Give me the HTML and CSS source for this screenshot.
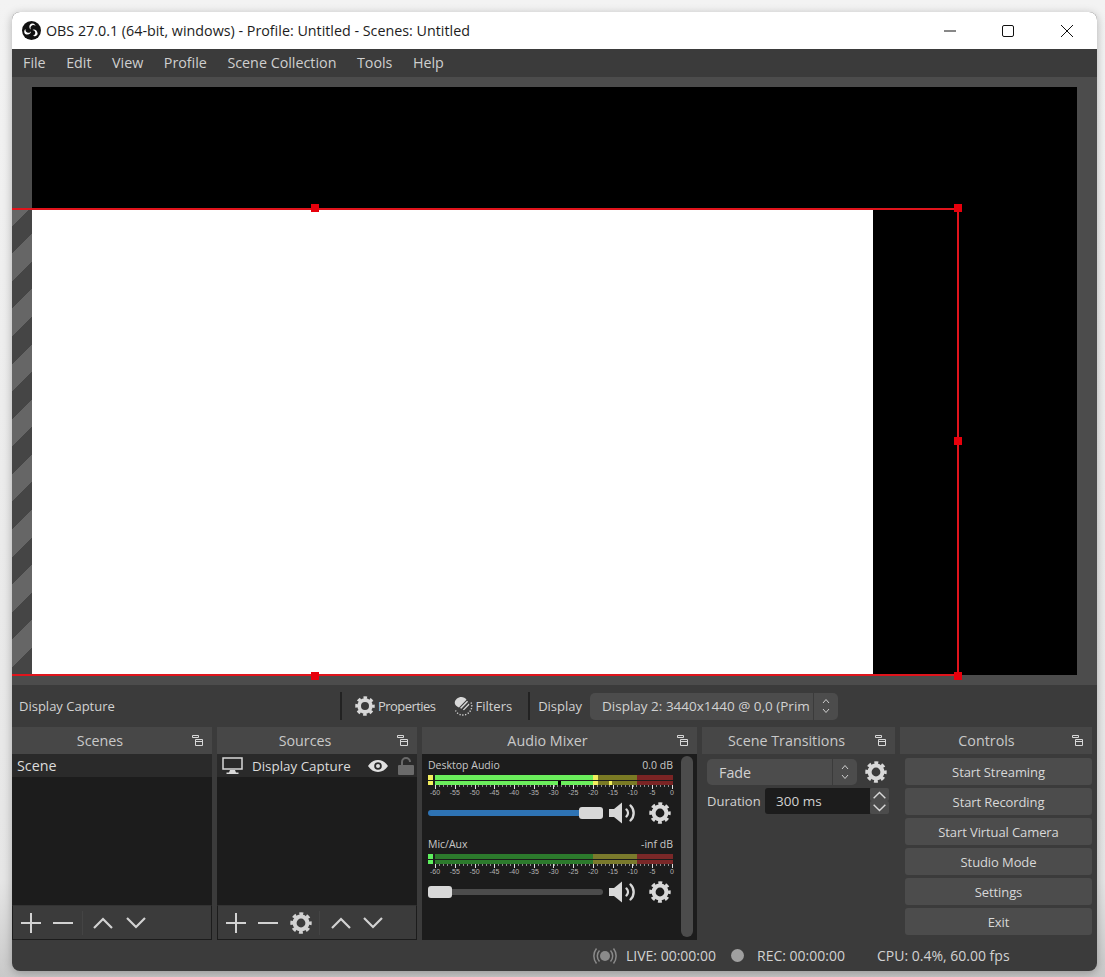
FILE: index.html
```html
<!DOCTYPE html>
<html lang="en">
<head>
<meta charset="utf-8">
<title>OBS 27.0.1</title>
<link rel="stylesheet" href="styles.css">
</head>
<body>
<svg class="defs" width="0" height="0" aria-hidden="true">
  <symbol id="gear" viewBox="0 0 24 24">
    <circle cx="12" cy="12" r="7" fill="none" stroke="currentColor" stroke-width="4.4"/>
    <circle cx="12" cy="12" r="9.9" fill="none" stroke="currentColor" stroke-width="3.6" stroke-dasharray="4.2 3.576" stroke-dashoffset="2.1"/>
  </symbol>
  <symbol id="float" viewBox="0 0 11 11">
    <path d="M.5.5h6v2h-6zM3.5 4.5h7v6h-7zM3.5 6.500h7" fill="none" stroke="currentColor"/>
  </symbol>
  <symbol id="speaker" viewBox="0 0 28 22">
    <path d="M0 7h5l8-6.500v21l-8-6.500H0z" fill="currentColor"/>
    <path d="M17.500 7.500a5 5 0 0 1 0 7M21.500 3.500a10.500 10.500 0 0 1 0 15" fill="none" stroke="currentColor" stroke-width="2.400" stroke-linecap="round"/>
  </symbol>
  <symbol id="updown" viewBox="0 0 10 18">
    <path d="M2 6l3-3.500L8 6M2 12l3 3.500L8 12" fill="none" stroke="currentColor"/>
  </symbol>
  <symbol id="plus" viewBox="0 0 20 20"><path d="M10 0v20M0 10h20" stroke="currentColor" stroke-width="2"/></symbol>
  <symbol id="minus" viewBox="0 0 20 20"><path d="M0 10h20" stroke="currentColor" stroke-width="2"/></symbol>
  <symbol id="up" viewBox="0 0 20 12"><path d="M1 11l9-9 9 9" fill="none" stroke="currentColor" stroke-width="2.200"/></symbol>
  <symbol id="down" viewBox="0 0 20 12"><path d="M1 1l9 9 9-9" fill="none" stroke="currentColor" stroke-width="2.200"/></symbol>
</svg>

<div class="window">
  <header class="titlebar">
    <svg class="logo" viewBox="0 0 20 20">
      <circle cx="10" cy="10" r="10" fill="#111"/>
      <path d="M9.500 2.800a3.600 3.600 0 0 1 4.800 2.500c-1.400-1.400-3.600-1.200-4.700.1-.9 1.100-.9 2.600 0 3.600-1.900-.6-2.900-4.600-.1-6.200zM3.400 13.800a3.600 3.600 0 0 1 .3-5.400c-.4 2 .8 3.600 2.400 4 1.400.3 2.700-.4 3.300-1.700.4 2-2.400 4.800-6 3.100zM16.500 13.600a3.600 3.600 0 0 1-5.100 1.900c2-.4 2.900-2.300 2.500-3.900-.3-1.300-1.600-2.200-3-2.200 1.400-1.300 5.400-.4 5.600 4.200z" fill="#fff"/>
    </svg>
    <span class="title">OBS 27.0.1 (64-bit, windows) - Profile: Untitled - Scenes: Untitled</span>
    <svg class="winbtn win-min" viewBox="0 0 12 12"><path d="M0 6h12" stroke="#111"/></svg>
    <svg class="winbtn win-max" viewBox="0 0 12 12"><rect x=".5" y=".5" width="11" height="11" rx="1.500" fill="none" stroke="#111"/></svg>
    <svg class="winbtn win-close" viewBox="0 0 12 12"><path d="M0 0l12 12M12 0L0 12" stroke="#111"/></svg>
  </header>

  <nav class="menubar">
    <span>File</span><span>Edit</span><span>View</span><span>Profile</span><span>Scene Collection</span><span>Tools</span><span>Help</span>
  </nav>

  <main class="preview">
    <div class="canvas"></div>
    <div class="stripes"></div>
    <div class="capture"></div>
    <div class="selbox"></div>
    <i class="handle h-top"></i>
    <i class="handle h-tr"></i>
    <i class="handle h-right"></i>
    <i class="handle h-bottom"></i>
    <i class="handle h-br"></i>
  </main>

  <section class="srcbar">
    <span class="srcname">Display Capture</span>
    <i class="sep"></i>
    <button class="tool tool-props"><svg class="ico20"><use href="#gear"/></svg><span class="props-label">Properties</span></button>
    <button class="tool tool-filters">
      <svg class="ico20" viewBox="0 0 20 20">
        <path d="M6 1.500c3-1.200 6 0 7.500 2.200L6 11.500C4.500 11 3 9.800 2.200 8.500 1 6 2.500 2.800 6 1.500z" fill="currentColor"/>
        <path d="M14 4.800l-7 7.200 1.300.8 6.800-7zM15.800 7.500l-6 6.200 1.200.6 5.400-5.500z" fill="currentColor"/>
        <path d="M18 6.500a8.800 8.800 0 0 1-1.500 9.500 8.800 8.800 0 0 1-9.500 2.500 8.800 8.800 0 0 1-4.500-4" fill="none" stroke="currentColor" stroke-width="1.400" stroke-dasharray="1.200 1.600"/>
      </svg>Filters</button>
    <i class="sep sep2"></i>
    <span class="displaylabel">Display</span>
    <div class="combo combo-display">
      <span class="combo-text">Display 2: 3440x1440 @ 0,0 (Prim</span>
      <span class="combo-arrow"><svg class="updown"><use href="#updown"/></svg></span>
    </div>
  </section>

  <section class="docks">
    <div class="dock dock-scenes">
      <div class="docktitle"><span>Scenes</span><svg class="floaticon"><use href="#float"/></svg></div>
      <div class="listpanel">
        <div class="listrow"><span class="scene-name">Scene</span></div>
      </div>
      <div class="listtools">
        <svg class="t-plus"><use href="#plus"/></svg>
        <svg class="t-minus"><use href="#minus"/></svg>
        <i class="tsep"></i>
        <svg class="t-up"><use href="#up"/></svg>
        <svg class="t-down"><use href="#down"/></svg>
      </div>
    </div>

    <div class="dock dock-sources">
      <div class="docktitle"><span>Sources</span><svg class="floaticon"><use href="#float"/></svg></div>
      <div class="listpanel">
        <div class="listrow">
          <svg class="monitor" viewBox="0 0 21 17"><path d="M1 1h19v11H1z" fill="none" stroke="currentColor" stroke-width="1.500"/><path d="M8 13h5l1 2.500h2.500V17h-12v-1.500H7z" fill="currentColor"/></svg>
          <span class="source-name">Display Capture</span>
          <svg class="eye" viewBox="0 0 20 12"><path d="M0 6c2.500-3.800 6-6 10-6s7.500 2.200 10 6c-2.500 3.800-6 6-10 6S2.500 9.800 0 6zm10 3.800a3.800 3.800 0 1 0 0-7.600 3.800 3.800 0 0 0 0 7.600zm0-1.800a2 2 0 1 1 0-4 2 2 0 0 1 0 4z" fill="currentColor" fill-rule="evenodd"/></svg>
          <svg class="lock" viewBox="0 0 16 18"><path d="M4 8V5a4 4 0 0 1 8 0" fill="none" stroke="currentColor" stroke-width="2"/><rect x="0" y="8" width="16" height="10" rx="1" fill="currentColor"/></svg>
        </div>
      </div>
      <div class="listtools">
        <svg class="t-plus"><use href="#plus"/></svg>
        <svg class="t-minus"><use href="#minus"/></svg>
        <svg class="t-gear"><use href="#gear"/></svg>
        <i class="tsep"></i>
        <svg class="t-up"><use href="#up"/></svg>
        <svg class="t-down"><use href="#down"/></svg>
      </div>
    </div>

    <div class="dock dock-mixer">
      <div class="docktitle"><span>Audio Mixer</span><svg class="floaticon"><use href="#float"/></svg></div>
      <div class="mixer">
        <div class="strips">
          <div class="strip">
            <div class="striphead"><span>Desktop Audio</span><span>0.0 dB</span></div>
            <div class="meter">
              <div class="peak"><i class="p-yellow"></i><i class="p-yellow"></i></div>
              <div class="chans"><i class="chan ch-a1"></i><i class="chan ch-a2"></i></div>
            </div>
            <div class="ticks"></div>
            <div class="scale"><span>-60</span><span>-55</span><span>-50</span><span>-45</span><span>-40</span><span>-35</span><span>-30</span><span>-25</span><span>-20</span><span>-15</span><span>-10</span><span>-5</span><span>0</span></div>
            <div class="ctl">
              <div class="slider"><i class="fill"></i><i class="thumb"></i></div>
              <svg class="speaker"><use href="#speaker"/></svg>
              <svg class="stripgear"><use href="#gear"/></svg>
            </div>
          </div>
          <div class="strip">
            <div class="striphead"><span>Mic/Aux</span><span>-inf dB</span></div>
            <div class="meter">
              <div class="peak"><i class="p-green"></i><i class="p-green"></i></div>
              <div class="chans"><i class="chan ch-idle"></i><i class="chan ch-idle"></i></div>
            </div>
            <div class="ticks"></div>
            <div class="scale"><span>-60</span><span>-55</span><span>-50</span><span>-45</span><span>-40</span><span>-35</span><span>-30</span><span>-25</span><span>-20</span><span>-15</span><span>-10</span><span>-5</span><span>0</span></div>
            <div class="ctl">
              <div class="slider"><i class="thumb"></i><i class="rest"></i></div>
              <svg class="speaker"><use href="#speaker"/></svg>
              <svg class="stripgear"><use href="#gear"/></svg>
            </div>
          </div>
        </div>
        <div class="scrollbar"></div>
      </div>
    </div>

    <div class="dock dock-trans">
      <div class="docktitle"><span>Scene Transitions</span><svg class="floaticon"><use href="#float"/></svg></div>
      <div class="transbody">
        <div class="transrow">
          <div class="combo combo-fade">
            <span class="combo-text">Fade</span>
            <span class="combo-arrow"><svg class="updown"><use href="#updown"/></svg></span>
          </div>
          <svg class="transgear"><use href="#gear"/></svg>
        </div>
        <div class="transrow durrow">
          <span class="durlabel">Duration</span>
          <span class="durinput">300 ms</span>
          <span class="spin">
            <span class="spinbtn"><svg class="spinico"><use href="#up"/></svg></span>
            <span class="spinbtn"><svg class="spinico"><use href="#down"/></svg></span>
          </span>
        </div>
      </div>
    </div>

    <div class="dock dock-controls">
      <div class="docktitle"><span>Controls</span><svg class="floaticon"><use href="#float"/></svg></div>
      <div class="controls">
        <button class="ctlbtn">Start Streaming</button>
        <button class="ctlbtn">Start Recording</button>
        <button class="ctlbtn">Start Virtual Camera</button>
        <button class="ctlbtn">Studio Mode</button>
        <button class="ctlbtn">Settings</button>
        <button class="ctlbtn">Exit</button>
      </div>
    </div>
  </section>

  <footer class="statusbar">
    <svg class="liveicon" viewBox="0 0 24 18">
      <circle cx="12" cy="9" r="5" fill="currentColor"/>
      <path d="M6.500 3.500a8 8 0 0 0 0 11M17.500 3.500a8 8 0 0 1 0 11M3.500 1.500a12 12 0 0 0 0 15M20.500 1.500a12 12 0 0 1 0 15" fill="none" stroke="currentColor" stroke-width="1.500"/>
    </svg>
    <span class="st-live">LIVE: 00:00:00</span>
    <i class="recdot"></i>
    <span class="st-rec">REC: 00:00:00</span>
    <span class="st-cpu">CPU: 0.4%, 60.00 fps</span>
  </footer>
</div>
</body>
</html>
```

FILE: styles.css
```css
* { box-sizing: border-box; }
html, body { margin: 0; height: 100%; }
body {
  background: linear-gradient(#f3f3f3, #e6e6e6 90%, #c9c9c9);
  font-family: "Open Sans", "Liberation Sans", sans-serif;
  font-size: 14px;
  color: #d2d2d2;
  overflow: hidden;
  padding: 12px 8px 6px 12px;
}
.defs { position: absolute; }
i { display: block; }
button { font: inherit; color: inherit; border: 0; background: none; padding: 0; }
svg { display: block; }

.window {
  width: 1085px;
  height: 959px;
  display: flex;
  flex-direction: column;
  background: #3b3b3b;
  border-radius: 8px;
  overflow: hidden;
  box-shadow: 0 2px 10px rgba(0, 0, 0, .28);
}

.titlebar {
  height: 37px;
  flex: none;
  background: #fff;
  display: flex;
  align-items: center;
  color: #1d1d1d;
  padding-left: 10px;
}
.logo { width: 19px; height: 19px; flex: none; }
.title { margin-left: 5px; flex: 1; font-size: 14.300px; white-space: nowrap; }
.winbtn { width: 12px; height: 12px; flex: none; }
.win-min { margin-right: 46px; }
.win-max { margin-right: 47px; }
.win-close { margin-right: 24px; }

.menubar {
  height: 28px;
  flex: none;
  background: #3b3b3b;
  display: flex;
  align-items: center;
  padding: 0 0 2px 11px;
  gap: 20.500px;
  font-size: 14.300px;
  color: #cfcfcf;
}

.preview {
  position: relative;
  height: 608px;
  flex: none;
  background: #4c4c4c;
  padding: 10px 20px;
  overflow: hidden;
}
.canvas { height: 100%; background: #000; }
.stripes {
  position: absolute;
  left: 0; top: 132px;
  width: 20px; height: 466px;
  background: repeating-linear-gradient(-45deg, #454545 0 19.500px, #666 19.500px 39px);
}
.capture {
  position: absolute;
  left: 20px; top: 133px;
  width: 841px; height: 465px;
  background: #fff;
}
.selbox {
  position: absolute;
  left: -4px; top: 131px;
  width: 951px; height: 468px;
  border: 2px solid #e0141c;
}
.handle {
  position: absolute;
  width: 8px; height: 8px;
  background: #e8000c;
}
.h-top { left: 299px; top: 127px; }
.h-tr { left: 942px; top: 127px; }
.h-right { left: 942px; top: 360px; }
.h-bottom { left: 299px; top: 595px; }
.h-br { left: 942px; top: 595px; }

.srcbar {
  height: 42px;
  flex: none;
  background: #3b3b3b;
  display: flex;
  align-items: center;
  font-size: 13px;
}
.srcname { width: 328px; padding-left: 7px; }
.sep { width: 2px; height: 28px; background: #222; flex: none; }
.tool { display: flex; align-items: center; gap: 3px; }
.props-label { letter-spacing: -.55px; }
.ico20 { width: 20px; height: 20px; color: #d8d8d8; }
.tool-props { margin-left: 13px; }
.tool-filters { margin-left: 18px; gap: 2px; }
.sep2 { margin-left: 16px; }
.displaylabel { margin-left: 8px; }
.combo {
  display: flex;
  align-items: center;
  background: #4c4c4c;
  border-radius: 5px;
  height: 27px;
}
.combo-display { margin-left: 8px; width: 248px; font-size: 13.500px; }
.combo-text { flex: 1; padding-left: 12px; white-space: nowrap; overflow: hidden; }
.combo-arrow {
  width: 25px;
  height: 100%;
  border-left: 1px solid #3b3b3b;
  display: flex;
  align-items: center;
  justify-content: center;
  flex: none;
}
.updown { width: 10px; height: 18px; color: #cfcfcf; }

.docks {
  height: 213px;
  flex: none;
  display: grid;
  grid-template-columns: 200px 200px 275px 193px 192px;
  column-gap: 5px;
  font-size: 13px;
}
.dock { display: flex; flex-direction: column; min-width: 0; }
.docktitle {
  position: relative;
  height: 27px;
  flex: none;
  background: #474747;
  display: flex;
  align-items: center;
  justify-content: center;
  font-size: 14.300px;
  color: #c9c9c9;
  padding-right: 24px;
}
.dock-controls .docktitle { padding-right: 19px; }
.floaticon {
  position: absolute;
  right: 9px; top: 8px;
  width: 11px; height: 11px;
  color: #d8d8d8;
}
.listpanel { flex: 1; background: #1c1c1c; }
.listrow {
  height: 23px;
  background: #2a2a2a;
  display: flex;
  align-items: center;
  padding-left: 5px;
  font-size: 14.300px;
  color: #dcdcdc;
}
.monitor { width: 21px; height: 17px; color: #d8d8d8; flex: none; }
.source-name { margin-left: 9px; flex: 1; font-size: 13.400px; }
.eye { width: 20px; height: 12px; color: #e0e0e0; flex: none; }
.lock { width: 16px; height: 18px; color: #6a6a6a; margin: 0 3px 0 10px; flex: none; }
.listtools {
  height: 35px;
  flex: none;
  border: 1px solid #1c1c1c;
  border-top-color: #333;
  background: #3b3b3b;
  display: flex;
  align-items: center;
  padding-left: 8px;
  color: #d2d2d2;
}
.t-plus { width: 20px; height: 20px; }
.t-minus { width: 20px; height: 20px; margin-left: 12px; }
.t-gear { width: 22px; height: 22px; margin-left: 12px; }
.tsep { width: 1px; height: 24px; background: #444; margin-left: 9px; }
.t-up { width: 20px; height: 12px; margin-left: 10px; }
.t-down { width: 20px; height: 12px; margin-left: 13px; }
.dock-sources .tsep { margin-left: 7px; }
.dock-sources .t-up { margin-left: 11px; }
.dock-sources .t-down { margin-left: 12px; }

.mixer { flex: 1; display: flex; background: #1c1c1c; padding-top: 2px; }
.strips { width: 257px; flex: none; padding-left: 6px; }
.strip { height: 79px; }
.striphead {
  height: 18px;
  display: flex;
  justify-content: space-between;
  align-items: center;
  font-size: 10.500px;
  color: #c8c8c8;
  padding-right: 6px;
}
.meter { display: flex; height: 10px; width: 245px; margin-top: 1px; }
.peak { width: 5px; display: flex; flex-direction: column; gap: 1px; margin-right: 2px; }
.peak i { flex: 1; }
.p-yellow { background: #f2ee5e; }
.p-green { background: #5ef05e; }
.chans { flex: 1; display: flex; flex-direction: column; gap: 1px; }
.chan { flex: 1; }
.ch-a1 { background: linear-gradient(90deg, #6bee5c 0 158px, #f2ee5e 158px 163px, #7a7a24 163px 202px, #7a2424 202px); }
.ch-a2 { background: linear-gradient(90deg, #6bee5c 0 123px, #000 123px 126px, #6bee5c 126px 158px, #f2ee5e 158px 163px, #7a7a24 163px 174px, #f2ee5e 174px 177px, #7a7a24 177px 202px, #7a2424 202px); }
.ch-idle { background: linear-gradient(90deg, #2c7a2c 0 158px, #7a7a2c 158px 202px, #7a2828 202px); }
.ticks {
  height: 4px;
  width: 238px;
  margin-left: 7px;
  background:
    repeating-linear-gradient(90deg, #e0e0e0 0 1px, transparent 1px 19.750px) 0 0 / 100% 4px no-repeat,
    repeating-linear-gradient(90deg, #8c8c8c 0 1px, transparent 1px 3.950px) 0 0 / 100% 2px no-repeat;
}
.scale {
  display: flex;
  justify-content: space-between;
  width: 251px;
  font-size: 7px;
  line-height: 8px;
  color: #b4b4b4;
  font-family: "Liberation Sans", sans-serif;
}
.scale span { width: 14px; text-align: center; }
.ctl { display: flex; align-items: center; height: 22px; margin-top: 5px; }
.slider { width: 175px; height: 12px; display: flex; align-items: center; flex: none; }
.fill { width: 151px; height: 6px; background: #2e73b4; border-radius: 3px 0 0 3px; }
.rest { flex: 1; height: 6px; background: #4c4c4c; border-radius: 0 3px 3px 0; }
.thumb { width: 24px; height: 12px; background: #d8d8d8; border-radius: 3px; flex: none; }
.speaker { width: 28px; height: 22px; color: #d8d8d8; margin-left: 6px; flex: none; }
.stripgear { width: 22px; height: 22px; color: #d8d8d8; margin-left: 12px; flex: none; }
.scrollbar {
  width: 12px;
  height: 181px;
  margin-left: 2px;
  background: #4c4c4c;
  border-radius: 6px;
}

.transbody { flex: 1; padding: 5px; background: #3b3b3b; }
.transrow { display: flex; align-items: center; }
.combo-fade { width: 150px; height: 26px; }
.combo-fade .combo-text { font-size: 14.300px; }
.transgear { width: 22px; height: 22px; margin-left: 8px; color: #d8d8d8; }
.durrow { margin-top: 3px; }
.durlabel { width: 58px; flex: none; }
.durinput {
  width: 105px;
  height: 26px;
  background: #1c1c1c;
  border-radius: 3px 0 0 3px;
  padding-left: 11px;
  line-height: 27px;
  font-size: 13.500px;
}
.spin { display: flex; flex-direction: column; gap: 0; width: 19px; }
.spinbtn {
  height: 13px;
  background: #4c4c4c;
  border-radius: 2px;
  display: flex;
  align-items: center;
  justify-content: center;
}
.spinico { width: 13px; height: 8px; color: #d8d8d8; }

.controls { flex: 1; padding: 4px 0 0 5px; display: flex; flex-direction: column; gap: 3px; background: #3b3b3b; }
.ctlbtn {
  height: 27px;
  background: #4c4c4c;
  border-radius: 3px;
  text-align: center;
  color: #d8d8d8;
  letter-spacing: -.1px;
}

.statusbar {
  flex: 1;
  display: flex;
  align-items: center;
  font-size: 14px;
  color: #d2d2d2;
}
.liveicon { width: 24px; height: 18px; color: #8a8a8a; margin-left: 581px; flex: none; }
.st-live { margin-left: 9px; }
.recdot { width: 13px; height: 13px; border-radius: 50%; background: #a0a0a0; margin-left: 15px; }
.st-rec { margin-left: 13px; }
.st-cpu { margin-left: 32px; }
```
